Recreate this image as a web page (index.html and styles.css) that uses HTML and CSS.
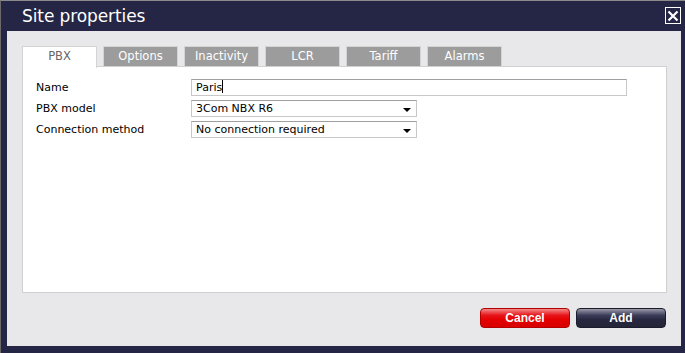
FILE: index.html
```html
<!DOCTYPE html>
<html lang="en">
<head>
    <meta charset="UTF-8">
    <title>Site properties</title>
    <link rel="stylesheet" href="styles.css">
</head>
<body>
    <div class="dialog">
        <div class="titlebar">
            <h1>Site properties</h1>
            <button class="close" title="Close">
                <svg width="12" height="12" viewBox="0 0 12 12"><path d="M1.5 1.5 L10.5 10.5 M10.5 1.5 L1.5 10.5" stroke="#fff" stroke-width="2.2" fill="none"/></svg>
            </button>
        </div>

        <div class="content">
            <div class="tabs">
                <span class="tab active">PBX</span>
                <span class="tab">Options</span>
                <span class="tab">Inactivity</span>
                <span class="tab">LCR</span>
                <span class="tab">Tariff</span>
                <span class="tab">Alarms</span>
            </div>

            <div class="panel">
                <div class="row">
                    <label class="row-label">Name</label>
                    <div class="field wide">Paris<span class="caret"></span></div>
                </div>
                <div class="row">
                    <label class="row-label">PBX model</label>
                    <div class="field select">3Com NBX R6<span class="arrow"></span></div>
                </div>
                <div class="row">
                    <label class="row-label">Connection method</label>
                    <div class="field select">No connection required<span class="arrow"></span></div>
                </div>
            </div>

            <div class="actions">
                <button class="btn cancel">Cancel</button>
                <button class="btn add">Add</button>
            </div>
        </div>
    </div>
</body>
</html>
```

FILE: styles.css
```css
body {
    margin: 0;
    font-family: "DejaVu Sans", Verdana, sans-serif;
    background-color: #252645;
}
.dialog {
    width: 684px;
    height: 352px;
    background-color: #252645;
    border-top: 1px solid #8a8a8a;
    border-left: 1px solid #6a6a6a;
}
.titlebar {
    height: 30px;
    display: flex;
    align-items: center;
    justify-content: space-between;
    padding: 0 4px 0 21px;
}
.titlebar h1 {
    margin: 0;
    color: #fff;
    font-size: 17px;
    font-weight: normal;
    letter-spacing: -0.1px;
    margin-top: -1px;
}
.close {
    width: 16px;
    height: 17px;
    padding: 0;
    margin-top: -1px;
    border: 1px solid #fff;
    background: none;
    display: flex;
    align-items: center;
    justify-content: center;
}

/* 内容区域 */
.content {
    margin: 0 4px 0 6px;
    height: 315px;
    background-color: #e8e8ea;
    padding: 15px 14px 0 15px;
    box-sizing: border-box;
}
.tabs {
    display: flex;
    gap: 6px;
    height: 20px;
}
.tab {
    width: 73px;
    height: 19px;
    border: 1px solid #d4d4d4;
    border-bottom: none;
    background-color: #9c9c9c;
    color: #fff;
    font-size: 11.5px;
    text-align: center;
    line-height: 19px;
}
.tab.active {
    background-color: #fff;
    color: #666;
    height: 21px;
    position: relative;
    z-index: 1;
}
.panel {
    height: 213px;
    background-color: #fff;
    border: 1px solid #d0d0d0;
    padding: 12px 0 0 13px;
}
.row {
    display: flex;
    align-items: center;
    height: 17px;
    margin-bottom: 4px;
}
.row-label {
    width: 155px;
    font-size: 11px;
    color: #000;
}
.field {
    position: relative;
    height: 15px;
    box-sizing: content-box;
    border: 1px solid #c8c8c8;
    border-top-color: #a0a0a0;
    font-size: 11px;
    line-height: 15px;
    padding-left: 4px;
    color: #000;
}
.field.wide {
    width: 430px;
}
.field.select {
    width: 220px;
}
.caret {
    display: inline-block;
    width: 1px;
    height: 13px;
    background-color: #000;
    vertical-align: -2px;
}
.arrow {
    position: absolute;
    right: 5px;
    top: 7px;
    border-left: 4px solid transparent;
    border-right: 4px solid transparent;
    border-top: 4px solid #000;
}

/* 按钮 */
.actions {
    display: flex;
    justify-content: flex-end;
    gap: 6px;
    margin-top: 15px;
    margin-right: 1px;
}
.btn {
    width: 90px;
    height: 20px;
    border-radius: 4px;
    border: 1px solid transparent;
    color: #fff;
    font-family: "Liberation Sans", Arial, sans-serif;
    font-weight: bold;
    font-size: 12px;
    padding: 0;
}
.btn.cancel {
    background: linear-gradient(#f38a8a 0%, #e6141a 35%, #e30000 60%, #d80000 100%);
    border-color: #b50000;
}
.btn.add {
    background: linear-gradient(#9a9aaa 0%, #3b3c58 35%, #27283f 60%, #242538 100%);
    border-color: #1b1b2c;
}
```
